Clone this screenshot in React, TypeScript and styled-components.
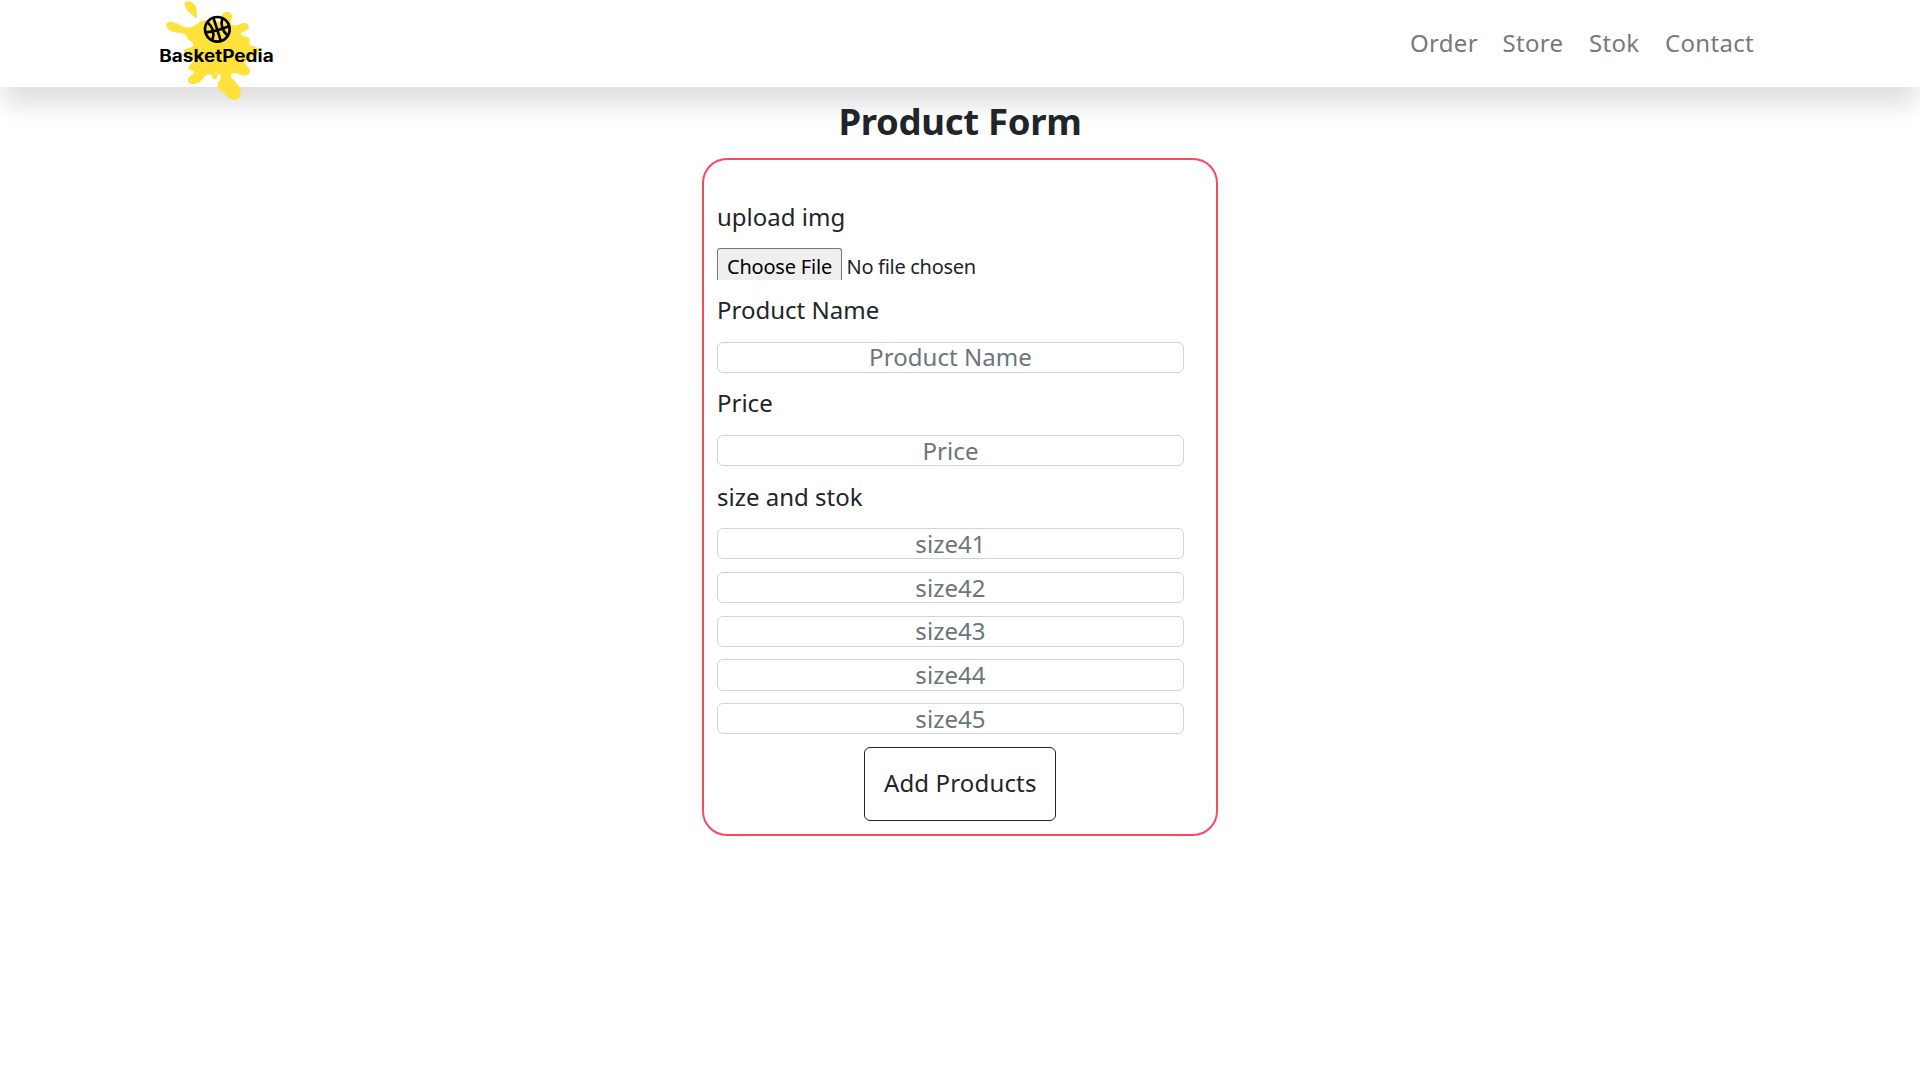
import React from "react";
import styled, { createGlobalStyle } from "styled-components";

const Global = createGlobalStyle`
  * { box-sizing: border-box; }
  body { margin: 0; background: #fff; color: #212529; font-family: "Noto Sans", "Open Sans", sans-serif; font-size: 24px; line-height: 37.5px; }
`;

const Header = styled.header`
  height: 87px;
  display: flex;
  justify-content: space-between;
  align-items: flex-start;
  padding: 0 166px 0 140px;
  background: #fff;
  box-shadow: 0 22px 23px -4px rgba(0, 0, 0, 0.13);
`;

const Logo = styled.svg`
  width: 160px;
  height: 110px;
  flex: none;
`;

const Nav = styled.nav`
  display: flex;
  gap: 25px;
  padding-top: 24px;
`;

const NavLink = styled.a<{ $width: number }>`
  width: ${(p) => p.$width}px;
  color: #797979;
  letter-spacing: 0.3px;
  white-space: nowrap;
`;

const Main = styled.main`
  display: flex;
  flex-direction: column;
  align-items: center;
`;

const Title = styled.h1`
  margin: 12px 0 14px;
  font-size: 36.5px;
  line-height: 45px;
  font-weight: 700;
  letter-spacing: -0.3px;
`;

const Card = styled.form`
  width: 516px;
  height: 678px;
  padding: 38.75px 12.5px 12.5px 13px;
  border: 2px solid #f84960;
  border-radius: 25px;
  display: flex;
  flex-direction: column;
`;

const Label = styled.label`
  height: 37.5px;
  margin-bottom: 12px;
  line-height: 35.5px;
`;

const Field = styled.input`
  width: 467px;
  height: 31.25px;
  flex: none;
  margin: 0 0 12.5px;
  padding: 0;
  border: 1px solid #ced4da;
  border-radius: 6px;
  background: #fff;
  font: inherit;
  letter-spacing: 0.05px;
  text-align: center;
  color: #212529;
  &::placeholder { color: #6c757d; opacity: 1; }
`;

const FileRow = styled.div`
  width: 467px;
  height: 31.25px;
  margin-bottom: 12.5px;
  flex: none;
  display: flex;
  gap: 4.5px;
  font-size: 20px;
  line-height: 26px;
  letter-spacing: -0.3px;
`;

const FileButton = styled.span`
  width: 125px;
  height: 31.25px;
  padding-top: 4.5px;
  flex: none;
  border: 1px solid #767676;
  border-bottom: 0;
  border-radius: 3px 3px 0 0;
  background: #efefef;
  color: #000;
  text-align: center;
  letter-spacing: -0.2px;
`;

const FileStatus = styled.span`
  padding-top: 5.25px;
`;

const Submit = styled.button`
  width: 192px;
  height: 74px;
  align-self: center;
  padding: 0 0 2px;
  border: 1px solid #212529;
  border-radius: 6px;
  background: #fff;
  color: #212529;
  font: inherit;
  letter-spacing: 0.15px;
`;

const links = [
  { text: "Order", width: 67.5 },
  { text: "Store", width: 61.5 },
  { text: "Stok", width: 51 },
  { text: "Contact", width: 89 },
];

const sizes = ["size41", "size42", "size43", "size44", "size45"];

export default function App() {
  return (
    <>
      <Global />
      <Header>
        <Logo viewBox="0 0 480 330">
          <path fill="#ffe13b" d="M136 6C146 0 159 6 166 18C172 30 170 43 171 56C159 47 142 35 136 22C134 15 133 10 136 6Z" />
          <path fill="#ffe13b" d="M80 70C88 63 104 66 116 73C129 82 142 85 157 80C169 76 175 66 188 62C205 58 218 66 231 58C245 51 246 36 262 35C276 36 280 50 273 63C268 74 282 80 296 74C309 66 325 68 327 80C327 92 309 91 303 101C302 112 327 105 329 119C330 132 323 136 338 138C352 139 360 146 354 158C346 174 318 174 316 187C317 201 331 202 330 216C326 230 309 228 296 222C282 216 270 220 273 230C279 242 296 250 302 270C304 287 299 299 286 300C267 299 257 285 249 276C238 270 231 263 233 252C236 243 244 238 243 226C238 218 230 225 231 234C226 242 219 239 216 228C206 218 197 226 189 236C177 250 160 257 147 248C140 238 146 229 156 224C169 217 157 210 145 207C144 193 158 193 160 180C163 166 129 166 131 153C132 142 158 148 160 134C160 124 145 123 141 113C139 100 123 99 109 98C91 96 75 83 80 70Z" />
          <path fill="#fff" d="M219 55Q232 50 246 55L242 67Q232 61 223 66Z" />
          <g fill="none" stroke="#000" strokeWidth="8">
            <circle cx="232" cy="88" r="37" />
            <path d="M196 97Q232 94 268 78M220 53L243 124M202 67Q228 88 217 122M247 54Q238 86 264 108" />
          </g>
          <text x="58" y="186" textLength="343" lengthAdjust="spacingAndGlyphs" fontFamily="Inter, sans-serif" fontWeight="700" fontSize="50">BasketPedia</text>
        </Logo>
        <Nav>
          {links.map((l) => <NavLink key={l.text} $width={l.width}>{l.text}</NavLink>)}
        </Nav>
      </Header>
      <Main>
        <Title>Product Form</Title>
        <Card>
          <Label>upload img</Label>
          <FileRow>
            <FileButton>Choose File</FileButton>
            <FileStatus>No file chosen</FileStatus>
          </FileRow>
          <Label>Product Name</Label>
          <Field placeholder="Product Name" />
          <Label>Price</Label>
          <Field placeholder="Price" />
          <Label>size and stok</Label>
          {sizes.map((s) => <Field key={s} placeholder={s} />)}
          <Submit type="button">Add Products</Submit>
        </Card>
      </Main>
    </>
  );
}
